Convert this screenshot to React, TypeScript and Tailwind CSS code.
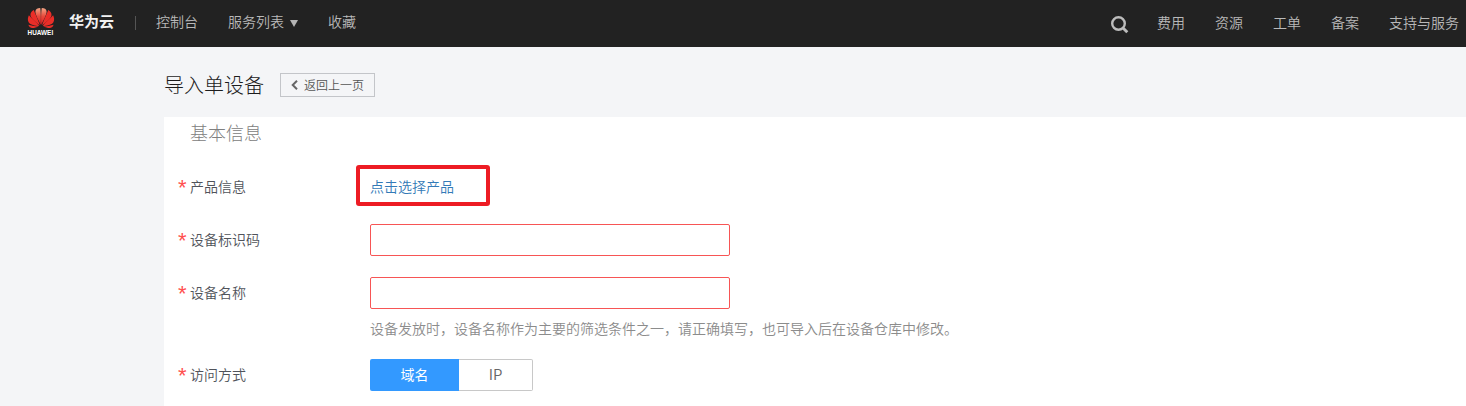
import React from 'react';

function HuaweiLogo() {
  return (
    <div className="flex w-[28px] shrink-0 flex-col" aria-label="HUAWEI">
      <svg width="28" height="21" viewBox="0 0 28 21">
        <defs>
          <linearGradient id="petal" x1="0" y1="0" x2="0" y2="1">
            <stop offset="0" stopColor="#f3a585" />
            <stop offset="0.5" stopColor="#e8483a" />
            <stop offset="1" stopColor="#e01a20" />
          </linearGradient>
        </defs>
        <g fill="url(#petal)">
          <path d="M13.700 18C12 13.500 8.200 8 8.400 4.200C8.700 2 10.600 1.100 13.200 1C13.900 4.500 14 12 13.700 18Z" />
          <path d="M14.300 18C16 13.500 19.800 8 19.600 4.200C19.300 2 17.400 1.100 14.800 1C14.100 4.500 14 12 14.300 18Z" />
        </g>
        <g fill="#ea2e28">
          <path d="M12.800 18.200C10 16.300 4.600 12.300 3.600 9C2.900 6.300 4.500 4.200 6.900 3C7.800 6.500 11.200 12.500 12.800 18.200Z" />
          <path d="M15.200 18.200C18 16.300 23.400 12.300 24.400 9C25.100 6.300 23.500 4.200 21.100 3C20.200 6.500 16.800 12.500 15.200 18.200Z" />
          <path d="M12.200 18.900C8 18.900 3.300 17.900 1.600 15.200C.4 13 .8 10.300 1.900 8.200C4.500 11.200 9.400 15 12.200 18.900Z" />
          <path d="M15.800 18.900C20 18.900 24.700 17.900 26.400 15.200C27.600 13 27.200 10.300 26.100 8.200C23.500 11.200 18.600 15 15.800 18.900Z" />
          <path d="M11.800 19.600C9 20.700 5.500 21.700 3.700 20.600C2.600 20 1.900 19 1.400 17.700C5 18.600 8.500 19.200 11.800 19.600Z" />
          <path d="M16.200 19.600C19 20.700 22.500 21.700 24.300 20.600C25.400 20 26.100 19 26.600 17.700C23 18.600 19.500 19.200 16.200 19.600Z" />
        </g>
      </svg>
      <span className="pl-[0.600px] text-[6.400px] leading-[10px] font-bold text-white [font-family:'Liberation_Sans',sans-serif]">HUAWEI</span>
    </div>
  );
}

function SearchIcon() {
  return (
    <svg width="18" height="18" viewBox="0 0 18 18" fill="none" stroke="#bcbcbc" className="shrink-0">
      <circle cx="7.500" cy="7.500" r="6.300" strokeWidth="2.400" />
      <path d="M12 12L16.300 16.300" strokeWidth="2.900" />
    </svg>
  );
}

function Header() {
  return (
    <header className="flex h-[47px] items-start justify-between bg-[#222222] pr-[7px] pl-[27px] text-[14px] leading-[20px] font-[350] text-[#b9b9b9]">
      <div className="flex items-start pt-[7px]">
        <HuaweiLogo />
        <span className="mt-[4px] ml-[14px] text-[15px] font-bold text-[#f2f2f2]">华为云</span>
        <span className="mt-[9px] ml-[21px] h-[14px] w-px bg-[#555555]" />
        <nav className="mt-[4px] ml-5 flex">
          <a>控制台</a>
          <a className="ml-[30px] flex items-center">
            服务列表
            <svg width="8" height="7" viewBox="0 0 8 7" className="mt-[4px] ml-[6px]" fill="#b5b5b5">
              <path d="M0 0H8L4 7Z" />
            </svg>
          </a>
          <a className="ml-[30px]">收藏</a>
        </nav>
      </div>
      <nav className="flex pt-[12px]">
        <span className="mt-[4px] mr-[28px]">
          <SearchIcon />
        </span>
        <div className="flex gap-[30px]">
          {['费用', '资源', '工单', '备案', '支持与服务'].map((label) => (
            <a key={label}>{label}</a>
          ))}
        </div>
      </nav>
    </header>
  );
}

function Row({ label, children }: { label: string; children: React.ReactNode }) {
  return (
    <div className="flex h-8 items-center">
      <label className="flex w-[192px] shrink-0 items-start pb-px">
        <span className="mt-[2px] w-[12px] text-[22px] leading-[20px] text-[#ff5050] [font-family:'Liberation_Sans',sans-serif]">*</span>
        <span>{label}</span>
      </label>
      {children}
    </div>
  );
}

const inputClass = 'h-8 w-[360px] rounded-[2px] border border-[#f75555] bg-white px-2 outline-none';

export default function App() {
  return (
    <div className="flex h-[406px] flex-col overflow-hidden bg-[#f4f5f7] [font-family:'Noto_Sans_CJK_SC',sans-serif]">
      <Header />
      <div className="flex h-[70px] shrink-0 items-center pt-[6px] pl-[164px]">
        <h1 className="text-[20px] leading-[28px] font-light text-[#1c1c1c]">导入单设备</h1>
        <button className="ml-4 flex h-6 w-[95px] items-center border border-[#c3c5c9] pl-[10px] text-[12px] leading-[20px] font-[350] text-[#555555]">
          <svg width="7" height="10" viewBox="0 0 7 10" fill="none" stroke="#666" strokeWidth="2" className="mr-[6px]">
            <path d="M6 .7L1.700 5L6 9.300" />
          </svg>
          返回上一页
        </button>
      </div>
      <main className="ml-[164px] flex-1 bg-white pl-[14px] text-[14px] leading-[20px] font-[350] text-[#50535a]">
        <h2 className="h-[54px] pt-[2px] pl-3 text-[18px] leading-[26px] font-light text-[#808080]">基本信息</h2>
        <Row label="产品信息">
          <div className="relative pb-[2px]">
            <a className="text-[#337ab7]">点击选择产品</a>
            <div className="pointer-events-none absolute -top-[11px] -left-[14px] h-[41px] w-[134px] rounded-[3px] border-4 border-[#ed1c24]" />
          </div>
        </Row>
        <div className="mt-[21px]">
          <Row label="设备标识码">
            <input className={inputClass} />
          </Row>
        </div>
        <div className="mt-[21px]">
          <Row label="设备名称">
            <input className={inputClass} />
          </Row>
        </div>
        <p className="mt-[9px] ml-[192px] text-[#8c8c8c]">设备发放时，设备名称作为主要的筛选条件之一，请正确填写，也可导入后在设备仓库中修改。</p>
        <div className="mt-[21px]">
          <Row label="访问方式">
            <div className="flex h-8">
              <button className="w-[89px] rounded-l-[2px] bg-[#3399ff] pb-[2px] font-normal text-white">域名</button>
              <button className="w-[74px] rounded-r-[2px] border border-l-0 border-[#c8c8c8] bg-white pb-[2px] text-[15px] text-[#666666]">IP</button>
            </div>
          </Row>
        </div>
      </main>
    </div>
  );
}
